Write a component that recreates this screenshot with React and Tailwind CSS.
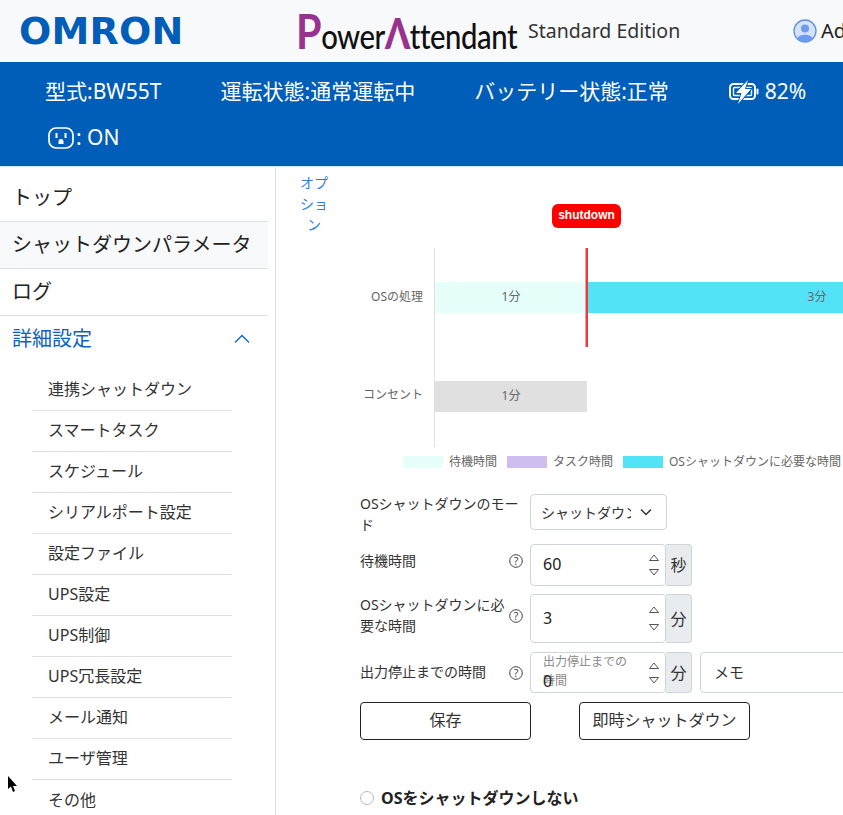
import React from 'react';

const SANS = 'font-["Noto_Sans","Noto_Sans_CJK_JP",sans-serif]';

const SUB_MENU = ['連携シャットダウン', 'スマートタスク', 'スケジュール', 'シリアルポート設定', '設定ファイル', 'UPS設定', 'UPS制御', 'UPS冗長設定', 'メール通知', 'ユーザ管理', 'その他'];

const Help = () => (
  <svg width="14" height="14" viewBox="0 0 14 14" className="shrink-0" fill="none">
    <circle cx="7" cy="7" r="6.3" stroke="#444" strokeWidth="1" />
    <text x="7" y="10.6" textAnchor="middle" fontSize="10.5" fill="#444" fontFamily="Noto Sans">?</text>
  </svg>
);

const Spinner = ({ gap }) => (
  <div className="absolute right-[6px] top-0 bottom-0 flex flex-col justify-center" style={{ gap }}>
    <svg width="10" height="7" viewBox="0 0 10 7" fill="none"><path d="M0.5 6.5 L5 1 L9.5 6.5 Z" stroke="#555" strokeWidth="1" /></svg>
    <svg width="10" height="7" viewBox="0 0 10 7" fill="none"><path d="M0.5 0.5 L5 6 L9.5 0.5 Z" stroke="#555" strokeWidth="1" /></svg>
  </div>
);

const NumberField = ({ value, unit, height, placeholder, gap }) => (
  <div className="flex" style={{ height }}>
    <div className="relative flex w-[136px] items-center rounded-[4px] border border-[#ced4da] bg-white pl-[12px]">
      {placeholder ? (
        <div className="absolute left-[12px] top-[-1px] w-[90px] text-[12px] leading-[19px] text-[#888]">{placeholder}</div>
      ) : null}
      <div className={`relative text-[16px] text-[#222] ${placeholder ? 'top-[8px]' : 'top-[-1px]'}`}>{value}</div>
      <Spinner gap={gap} />
    </div>
    <div className="flex w-[26px] items-center justify-center rounded-r-[4px] border border-l-0 border-[#ced4da] bg-[#e9ecef] text-[16px] text-[#333]">{unit}</div>
  </div>
);

const FormLabel = ({ children, help, className = '' }) => (
  <div className={`flex w-[170px] shrink-0 items-center pr-[7px] text-[14px] leading-[21px] text-[#333] ${className}`}>
    <span className="relative top-[-1px] flex-1">{children}</span>
    {help ? <Help /> : null}
  </div>
);

const Chart = () => (
  <svg width="483" height="290" viewBox="360 190 483 290" className="block" fontFamily="Noto Sans, Noto Sans CJK JP, sans-serif">
    <rect x="552" y="204" width="69" height="24" rx="6" fill="#ff0000" />
    <text x="586.5" y="219" textAnchor="middle" fontSize="12" fontWeight="700" fill="#fff" fontFamily="Liberation Sans, sans-serif">shutdown</text>
    <line x1="434.5" y1="248" x2="434.5" y2="447" stroke="#e0e0e0" />
    <rect x="435" y="282" width="152" height="31" fill="#e6fffb" />
    <rect x="587" y="282" width="256" height="31" fill="#53e3f7" />
    <rect x="435" y="381" width="152" height="31" fill="#e0e0e0" />
    <rect x="585.5" y="248" width="2.5" height="99" fill="#f0393f" />
    <text x="423" y="301" textAnchor="end" fontSize="12" fill="#666">OSの処理</text>
    <text x="423" y="399" textAnchor="end" fontSize="12" fill="#666">コンセント</text>
    <text x="511" y="301" textAnchor="middle" fontSize="12" fill="#666">1分</text>
    <text x="817" y="301" textAnchor="middle" fontSize="12" fill="#666">3分</text>
    <text x="511" y="400" textAnchor="middle" fontSize="12" fill="#666">1分</text>
    <rect x="403" y="456" width="40" height="12" fill="#e6fffb" />
    <text x="449" y="466" fontSize="12" fill="#666">待機時間</text>
    <rect x="507" y="456" width="40" height="12" fill="#d0bdf0" />
    <text x="553" y="466" fontSize="12" fill="#666">タスク時間</text>
    <rect x="623" y="456" width="40" height="12" fill="#53e3f7" />
    <text x="669" y="466" fontSize="12" fill="#666">OSシャットダウンに必要な時間</text>
  </svg>
);

const App = () => {
  return (
    <div className={`relative h-[815px] w-[843px] overflow-hidden bg-white ${SANS}`}>
      {/* ヘッダー */}
      <header className="flex h-[62px] items-center overflow-hidden whitespace-nowrap bg-[#f8f9fa]">
        <div className='ml-[19px] w-[277px] shrink-0 font-["DejaVu_Sans",sans-serif] text-[38px] font-bold leading-none tracking-[0.2px] text-[#005eb8]'>OMRON</div>
        <div className='flex w-[232px] shrink-0 origin-left scale-x-[0.86] items-baseline font-["Lato",sans-serif] text-[34px] font-medium leading-none tracking-[-0.5px] text-[#111]'>
          <span className="text-[48px] font-bold text-[#97328f]">P</span>ower<span className="text-[42px] font-black text-[#97328f]">Λ</span>ttendant
        </div>
        <div className="w-[265px] shrink-0 text-[19.5px] text-[#333]">Standard Edition</div>
        <svg width="24" height="24" viewBox="0 0 24 24" className="shrink-0">
          <circle cx="12" cy="12" r="11" fill="#d6e2fb" stroke="#5f8fe8" strokeWidth="1.3" />
          <circle cx="12" cy="9.5" r="4" fill="#6f9bee" />
          <path d="M4.5 19.5 C6 14.5 18 14.5 19.5 19.5 C16 23.5 8 23.5 4.5 19.5 Z" fill="#6f9bee" />
        </svg>
        <span className="ml-[4px] text-[20px] text-[#222]">Admin</span>
      </header>

      {/* ステータスバー */}
      <div className="flex h-[104px] flex-wrap content-start gap-x-[59px] bg-[#005eb8] pl-[45px] pt-[7px] text-[21px] text-white">
        <div className="flex h-[46px] items-center">型式:BW55T</div>
        <div className="flex h-[46px] items-center">運転状態:通常運転中</div>
        <div className="flex h-[46px] items-center">バッテリー状態:正常</div>
        <div className="flex h-[46px] items-center gap-[6px] pl-[1px]">
          <svg width="30" height="24" viewBox="0 0 30 24" fill="none">
            <rect x="1" y="4" width="25" height="15" rx="3.5" stroke="#fff" strokeWidth="2" />
            <rect x="4.5" y="7.5" width="18" height="8" rx="1" stroke="#fff" strokeWidth="1.4" />
            <rect x="27.5" y="8.5" width="2" height="6" rx="1" fill="#fff" />
            <path d="M19 0 L7 13 H12.5 L9 24 L22 9 H16 Z" fill="#fff" stroke="#005eb8" strokeWidth="2" paintOrder="stroke" />
          </svg>
          <span>82%</span>
        </div>
        <div className="flex h-[46px] items-center pl-[3px]">
          <svg width="26" height="24" viewBox="0 0 26 24" fill="none" className="mr-[2px]">
            <rect x="1" y="2" width="24" height="20" rx="7" stroke="#fff" strokeWidth="1.7" />
            <rect x="7.5" y="7" width="2" height="5" fill="#fff" />
            <rect x="16.5" y="7" width="2" height="5" fill="#fff" />
            <path d="M10.5 18 V15.5 a2.5 2.5 0 0 1 5 0 V18 Z" fill="#fff" />
          </svg>
          <span>: ON</span>
        </div>
      </div>

      <div className="flex h-[649px] border-t border-[#cfe8fb]">
        {/* サイドメニュー */}
        <aside className="w-[276px] shrink-0 border-r border-[#dee2e6] pt-[8px]">
          <div className="w-[268px] text-[20px] text-[#222]">
            <div className="flex h-[47px] items-center border-b border-[#dee2e6] pl-[12px]">トップ</div>
            <div className="flex h-[47px] items-center border-b border-[#dee2e6] bg-[#f8f9fa] pl-[12px]">シャットダウンパラメータ</div>
            <div className="flex h-[47px] items-center border-b border-[#dee2e6] pl-[12px]">ログ</div>
            <div className="flex h-[47px] items-center justify-between pb-[2px] pl-[12px] pr-[18px] text-[#0d62c4]">
              <span>詳細設定</span>
              <svg width="16" height="16" viewBox="0 0 16 16" fill="none"><path d="M1 11.5 L8 4.5 L15 11.5" stroke="#0d62c4" strokeWidth="1.3" /></svg>
            </div>
          </div>
          <ul className="ml-[32px] mt-[7px] w-[200px] text-[16px] text-[#333]">
            {SUB_MENU.map((name) => (
              <li key={name} className="flex h-[41px] items-center border-b border-[#dee2e6] pb-[2px] pl-[16px] last:border-b-0">{name}</li>
            ))}
          </ul>
        </aside>

        {/* メイン */}
        <main className="flex min-w-0 flex-1">
          <div className="ml-[23px] mt-[5px] w-[30px] shrink-0 text-center text-[14px] leading-[21px] text-[#2f7fe0]">オプション</div>
          <div className="ml-[31px] min-w-0 flex-1 pt-[23px]">
            <Chart />
            <div className="flex flex-col">
              <div className="mt-[14px] flex h-[42px] items-start">
                <FormLabel>OSシャットダウンのモード</FormLabel>
                <div className="flex h-[36px] w-[137px] items-center justify-between overflow-hidden rounded-[4px] border border-[#ced4da] pl-[10px] pr-[14px] text-[14px] text-[#333]">
                  <span className="w-[90px] overflow-hidden whitespace-nowrap">シャットダウン</span>
                  <svg width="12" height="8" viewBox="0 0 12 8" fill="none"><path d="M1 1.5 L6 6.5 L11 1.5" stroke="#333" strokeWidth="1.5" /></svg>
                </div>
              </div>
              <div className="mt-[8px] flex h-[42px]">
                <FormLabel help className="pb-[8px]">待機時間</FormLabel>
                <NumberField value="60" unit="秒" height={42} gap={8} />
              </div>
              <div className="mt-[8px] flex h-[49px]">
                <FormLabel help className="pb-[6px]">OSシャットダウンに必要な時間</FormLabel>
                <NumberField value="3" unit="分" height={49} gap={11} />
              </div>
              <div className="mt-[9px] flex h-[41px]">
                <FormLabel help>出力停止までの時間</FormLabel>
                <NumberField value="0" unit="分" height={41} gap={8} placeholder="出力停止までの時間" />
                <div className="ml-[8px] flex w-[300px] shrink-0 items-center rounded-l-[4px] border border-[#ced4da] pl-[13px] text-[15px] text-[#333]">メモ</div>
              </div>
              <div className="mt-[9px] flex gap-[48px]">
                <button className="h-[38px] w-[171px] rounded-[4px] border border-[#222] bg-white pb-[2px] text-[16px] text-[#333]">保存</button>
                <button className="h-[38px] w-[171px] rounded-[4px] border border-[#222] bg-white pb-[2px] text-[16px] text-[#333]">即時シャットダウン</button>
              </div>
              <div className="mt-[46px] flex items-center gap-[7px]">
                <span className="h-[14px] w-[14px] rounded-full border border-[#bbb] bg-white" />
                <span className="text-[16px] font-bold text-[#222]">OSをシャットダウンしない</span>
              </div>
            </div>
          </div>
        </main>
      </div>

      {/* マウスカーソル */}
      <svg width="12" height="18" viewBox="0 0 12 18" className="absolute left-[7px] top-[776px]">
        <path d="M1 0 L1 13 L4 10.5 L6 16 L8 15 L6 10 L10 10 Z" fill="#000" />
      </svg>
    </div>
  );
};

export default App;
